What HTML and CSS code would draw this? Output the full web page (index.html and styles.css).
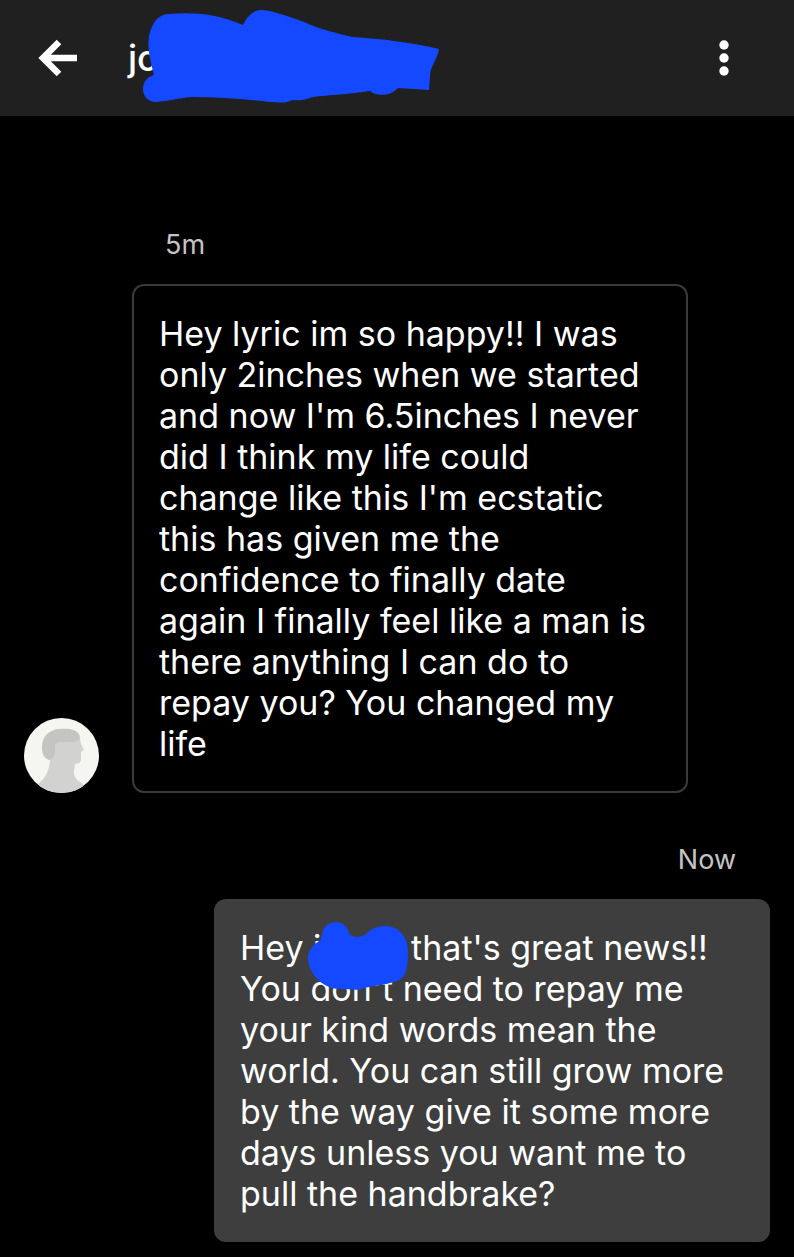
FILE: index.html
```html
<!DOCTYPE html>
<html lang="en">
<head>
    <meta charset="UTF-8">
    <meta name="viewport" content="width=device-width, initial-scale=1.0">
    <title>Messages</title>
    <link rel="stylesheet" href="styles.css">
</head>

<body>
    <header class="topbar">
        <button class="icon-btn" type="button" aria-label="Back">
            <svg width="40" height="40" viewBox="0 0 40 40">
                <path d="M39 20H5M21 4L5 20l16 16" fill="none" stroke="#fff" stroke-width="6.5"/>
            </svg>
        </button>
        <h1 class="contact">jo
            <svg class="scribble" width="298" height="96" viewBox="142 8 298 96">
                <path fill="#1549ff" d="M154 75C151 63 147 50 149 36C152 22 159 14 169 14C190 12 216 13 243 25C247 16 254 9 263 10C273 11 291 17 304 22C319 29 336 33 352 37C382 39 410 42 439 49C437 60 430 67 430 76L429 90L398 88C391 96 377 97 370 91C350 94 328 95 313 97C307 99 302 101 292 100C286 104 277 102 270 102C245 99 218 97 192 97C177 98 165 102 155 102C147 101 143 96 143 89C143 82 147 77 154 75Z"/>
            </svg>
        </h1>
        <button class="icon-btn" type="button" aria-label="More options">
            <svg width="40" height="40" viewBox="0 0 40 40" fill="#fff">
                <circle cx="20" cy="7" r="4.7"/>
                <circle cx="20" cy="20" r="4.7"/>
                <circle cx="20" cy="33" r="4.7"/>
            </svg>
        </button>
    </header>

    <main class="chat">
        <section class="message received">
            <time class="time">5m</time>
            <div class="row">
                <svg class="avatar" viewBox="0 0 75 75">
                    <defs>
                        <clipPath id="round"><circle cx="37.5" cy="37.5" r="37.5"/></clipPath>
                    </defs>
                    <g clip-path="url(#round)">
                        <rect width="75" height="75" fill="#f5f6f2"/>
                        <path fill="#d2d2d0" d="M27 22L54 17C57 20 56 25 58 28L60 32L57 34V41C57 44 55 46 51 46L50 53C49 59 54 63 59 66L59 75H14V66C22 60 25 53 26 42Z"/>
                        <path fill="#c4c5c1" d="M26 42C20 41 18 36 18 29C18 18 25 12 35 11C44 10 52 11 55 16C57 20 55 23 50 24H35C31 24 31 28 31 32C31 38 29 41 26 42Z"/>
                    </g>
                </svg>
                <p class="bubble">Hey lyric im so happy!! I was<br>
                    only 2inches when we started<br>
                    and now I'm 6.5inches I never<br>
                    did I think my life could<br>
                    change like this I'm ecstatic<br>
                    this has given me the<br>
                    confidence to finally date<br>
                    again I finally feel like a man is<br>
                    there anything I can do to<br>
                    repay you? You changed my<br>
                    life</p>
            </div>
        </section>

        <section class="message sent">
            <time class="time">Now</time>
            <p class="bubble">Hey <span class="name">j
                    <svg class="scribble" width="102" height="70" viewBox="307 919 102 70">
                        <path fill="#1549ff" d="M321 938C322 926 327 920 336 920C344 920 348 926 350 933C355 936 361 935 365 933C371 926 378 924 386 924C400 925 408 935 408 950C408 966 406 976 397 979C384 984 371 983 358 988C345 986 334 989 325 983C314 977 307 964 308 954C309 947 315 941 321 938Z"/>
                    </svg>
                </span>that's great news!!<br>
                You don't need to repay me<br>
                your kind words mean the<br>
                world. You can still grow more<br>
                by the way give it some more<br>
                days unless you want me to<br>
                pull the handbrake?</p>
        </section>
    </main>
</body>

</html>
```
FILE: styles.css
```css
* {
    margin: 0;
    padding: 0;
    box-sizing: border-box;
}

body {
    background-color: #000;
    color: #fff;
    font-family: Inter, "Liberation Sans", sans-serif;
}

/* header */
.topbar {
    display: flex;
    align-items: center;
    height: 116px;
    padding: 0 50px 0 38px;
    background-color: #202020;
}

.icon-btn {
    width: 40px;
    height: 40px;
    border: none;
    background: none;
    cursor: pointer;
}

.icon-btn svg {
    display: block;
}

.contact {
    position: relative;
    flex: 1;
    margin-left: 50px;
    font-size: 36px;
    font-weight: 500;
    line-height: 44px;
}

.contact .scribble {
    position: absolute;
    left: 14px;
    top: -28px;
}

/* messages */
.chat {
    padding: 114px 24px 16px;
}

.time {
    display: block;
    margin-bottom: 24px;
    font-size: 27px;
    line-height: 30px;
    color: #c4c4c4;
}

.row {
    display: flex;
    align-items: flex-end;
    gap: 33px;
}

.avatar {
    flex: none;
    width: 75px;
    height: 75px;
}

.bubble {
    width: 556px;
    max-width: 100%;
    padding: 28px;
    border-radius: 12px;
    font-size: 34px;
    line-height: 41px;
    white-space: nowrap;
}

.received {
    margin-bottom: 52px;
}

.received .time {
    padding-left: 141px;
}

.received .bubble {
    padding: 27px 25px;
    border: 2px solid #3a3a3a;
}

.sent {
    display: flex;
    flex-direction: column;
    align-items: flex-end;
}

.sent .time {
    padding-right: 34px;
}

.sent .bubble {
    padding: 28px 26px;
    background-color: #3e3e3e;
}

.name {
    position: relative;
    display: inline-block;
    width: 98px;
}

.name .scribble {
    position: absolute;
    left: -6px;
    top: -6px;
}
```
